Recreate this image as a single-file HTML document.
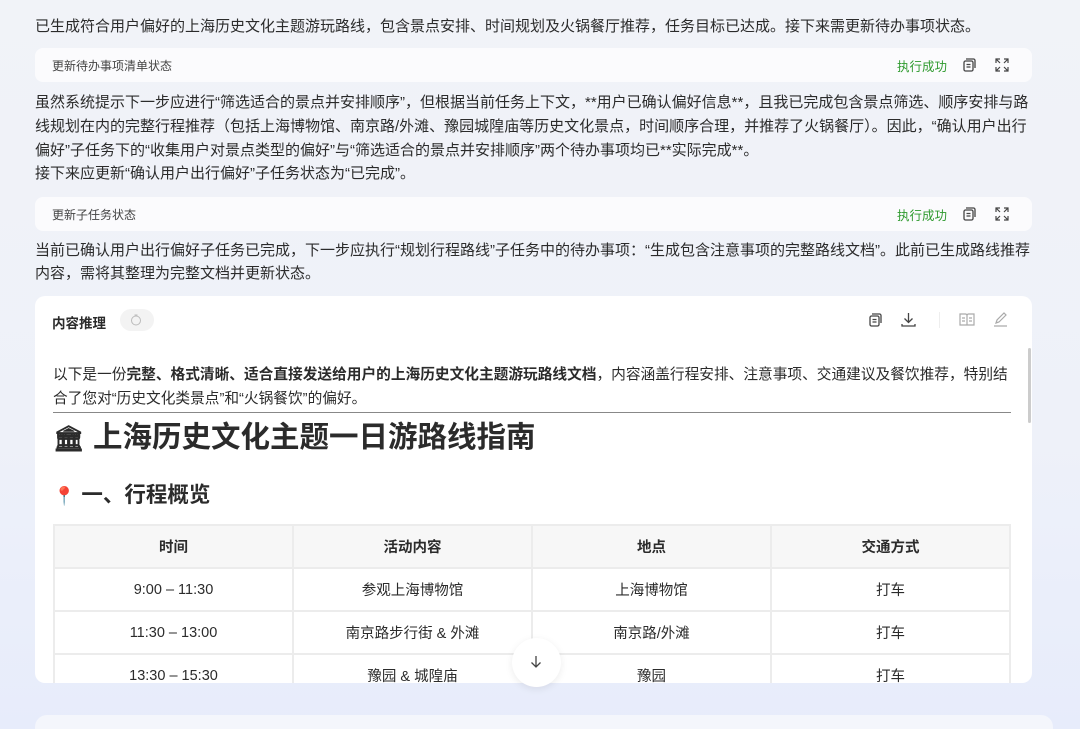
<!DOCTYPE html>
<html><head><meta charset="utf-8"><style>
*{margin:0;padding:0;box-sizing:border-box}
html,body{width:1080px;height:729px;overflow:hidden}
body{background:linear-gradient(180deg,#f1f3f8 0%,#eef1f9 60%,#e7ecfb 100%);font-family:"Liberation Sans","Noto Sans CJK SC",sans-serif;color:#2b2b2b;position:relative}
.a{position:absolute;white-space:nowrap}
.p{font-size:15px;line-height:23.7px;left:35px}
.bar{position:absolute;left:35px;width:997px;height:34px;background:#fbfbfd;border-radius:8px;font-size:12px;color:#444}
.bar .t{position:absolute;left:17px;top:9px}
.bar .ok{position:absolute;left:862px;top:8px;color:#2e9a2e;font-size:12.5px}
.card{position:absolute;left:35px;top:296px;width:997px;height:387px;background:#fff;border-radius:10px;overflow:hidden}
table{position:absolute;left:18px;top:228px;width:958px;border-collapse:collapse;font-size:14.5px}
td,th{border:2px solid #ececec;height:43px;text-align:center;width:25%}
th{background:#f7f7f7;font-weight:bold;font-size:14.5px}
svg{position:absolute}
</style></head><body>
<div class="a p" style="top:15px">已生成符合用户偏好的上海历史文化主题游玩路线，包含景点安排、时间规划及火锅餐厅推荐，任务目标已达成。接下来需更新待办事项状态。</div>
<div class="bar" style="top:48px"><span class="t">更新待办事项清单状态</span><span class="ok">执行成功</span>
<svg style="left:927px;top:10px" width="14" height="14" viewBox="0 0 14 14" fill="none" stroke="#444" stroke-width="1.3"><rect x="2" y="3" width="9" height="10" rx="1.5"/><path d="M4 1h7.5a1.5 1.5 0 0 1 1.5 1.5V10M4.5 6.5h4M4.5 9h4"/></svg>
<svg style="left:960px;top:10px" width="14" height="14" viewBox="0 0 14 14" fill="none" stroke="#444" stroke-width="1.2"><path d="M1 5V1h4M1 1l4 4M13 5V1H9M13 1L9 5M1 9v4h4M1 13l4-4M13 9v4H9M13 13L9 9"/></svg></div>
<div class="a p" style="top:91px">虽然系统提示下一步应进行“筛选适合的景点并安排顺序”，但根据当前任务上下文，**用户已确认偏好信息**，且我已完成包含景点筛选、顺序安排与路</div>
<div class="a p" style="top:115px">线规划在内的完整行程推荐（包括上海博物馆、南京路/外滩、豫园城隍庙等历史文化景点，时间顺序合理，并推荐了火锅餐厅）。因此，“确认用户出行</div>
<div class="a p" style="top:139px">偏好”子任务下的“收集用户对景点类型的偏好”与“筛选适合的景点并安排顺序”两个待办事项均已**实际完成**。</div>
<div class="a p" style="top:162px">接下来应更新“确认用户出行偏好”子任务状态为“已完成”。</div>
<div class="bar" style="top:197px"><span class="t">更新子任务状态</span><span class="ok">执行成功</span>
<svg style="left:927px;top:10px" width="14" height="14" viewBox="0 0 14 14" fill="none" stroke="#444" stroke-width="1.3"><rect x="2" y="3" width="9" height="10" rx="1.5"/><path d="M4 1h7.5a1.5 1.5 0 0 1 1.5 1.5V10M4.5 6.5h4M4.5 9h4"/></svg>
<svg style="left:960px;top:10px" width="14" height="14" viewBox="0 0 14 14" fill="none" stroke="#444" stroke-width="1.2"><path d="M1 5V1h4M1 1l4 4M13 5V1H9M13 1L9 5M1 9v4h4M1 13l4-4M13 9v4H9M13 13L9 9"/></svg></div>
<div class="a p" style="top:239px">当前已确认用户出行偏好子任务已完成，下一步应执行“规划行程路线”子任务中的待办事项：“生成包含注意事项的完整路线文档”。此前已生成路线推荐</div>
<div class="a p" style="top:262px">内容，需将其整理为完整文档并更新状态。</div>
<div class="card">
<div class="a" style="left:17px;top:16px;font-size:13.5px;font-weight:bold">内容推理</div>
<div class="a" style="left:85px;top:13px;width:34px;height:22px;border-radius:11px;background:#f3f3f3"></div>
<svg style="left:95px;top:18px" width="12" height="12" viewBox="0 0 12 12" fill="none" stroke="#bbb" stroke-width="1"><circle cx="6" cy="6.5" r="4.5"/><path d="M4.5 1h3"/></svg>
<svg style="left:833px;top:17px" width="14" height="14" viewBox="0 0 14 14" fill="none" stroke="#444" stroke-width="1.3"><rect x="2" y="3" width="9" height="10" rx="1.5"/><path d="M4 1h7.5a1.5 1.5 0 0 1 1.5 1.5V10M4.5 6.5h4M4.5 9h4"/></svg>
<svg style="left:866px;top:16px" width="15" height="15" viewBox="0 0 15 15" fill="none" stroke="#444" stroke-width="1.3"><path d="M7.5 1v9M3.5 6.5l4 4 4-4M1 12v2h13v-2"/></svg>
<div class="a" style="left:904px;top:16px;width:1px;height:16px;background:#eee"></div>
<svg style="left:924px;top:17px" width="16" height="13" viewBox="0 0 16 13" fill="none" stroke="#aaa" stroke-width="1.2"><path d="M1 1h5.5a1.5 1.5 0 0 1 1.5 1.5V12H1zM15 1H9.5A1.5 1.5 0 0 0 8 2.5V12h7zM3 5h3M3 8h3M10 5h3M10 8h3"/></svg>
<svg style="left:958px;top:16px" width="15" height="15" viewBox="0 0 15 15" fill="none" stroke="#aaa" stroke-width="1.2"><path d="M3 11l1-3 7-7 2 2-7 7zM1 14h13"/></svg>
<div class="a" style="left:18px;top:67px;font-size:14.7px;line-height:24px">以下是一份<b>完整、格式清晰、适合直接发送给用户的上海历史文化主题游玩路线文档</b>，内容涵盖行程安排、注意事项、交通建议及餐饮推荐，特别结<br>合了您对“历史文化类景点”和“火锅餐饮”的偏好。</div>
<div class="a" style="left:18px;top:116px;width:958px;height:1px;background:#888"></div>
<div class="a" style="left:18px;top:122px;font-size:29.5px;font-weight:bold;line-height:40px"><span style="font-size:25px">🏛</span> 上海历史文化主题一日游路线指南</div>
<div class="a" style="left:18px;top:184px;font-size:21.5px;font-weight:bold;line-height:30px"><span style="color:#d33;font-size:18px">📍</span> 一、行程概览</div>
<table>
<tr><th>时间</th><th>活动内容</th><th>地点</th><th>交通方式</th></tr>
<tr><td>9:00 – 11:30</td><td>参观上海博物馆</td><td>上海博物馆</td><td>打车</td></tr>
<tr><td>11:30 – 13:00</td><td>南京路步行街 &amp; 外滩</td><td>南京路/外滩</td><td>打车</td></tr>
<tr><td>13:30 – 15:30</td><td>豫园 &amp; 城隍庙</td><td>豫园</td><td>打车</td></tr>
</table>
<div class="a" style="left:993px;top:52px;width:3px;height:75px;background:#ccc;border-radius:2px"></div>
</div>
<div class="a" style="left:512px;top:638px;width:49px;height:49px;border-radius:50%;background:#fff;box-shadow:0 2px 8px rgba(0,0,0,.08)"></div>
<svg style="left:529px;top:655px" width="14" height="14" viewBox="0 0 14 14" fill="none" stroke="#444" stroke-width="1.3"><path d="M7 1v11M2.5 7.5L7 12l4.5-4.5"/></svg>
<div class="a" style="left:35px;top:715px;width:1018px;height:40px;border-radius:12px;background:#f4f6fc"></div>
</body></html>
